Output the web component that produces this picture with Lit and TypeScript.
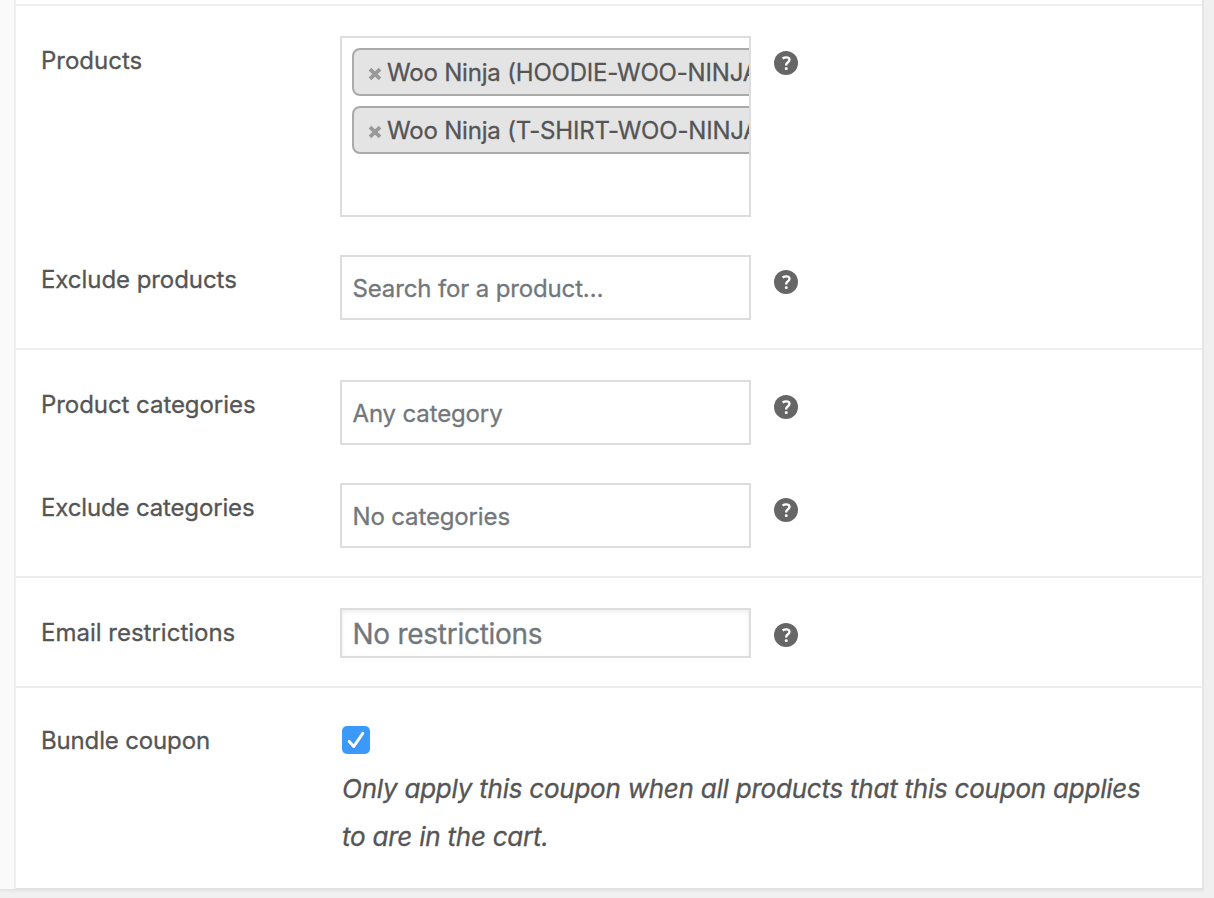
import { LitElement, html, css, svg } from "lit";
import { customElement, property } from "lit/decorators.js";

@customElement("help-tip")
class HelpTip extends LitElement {
  static styles = css`
    :host { display: block; width: 24px; height: 24px; }
    .icon { display: block; }
  `;
  render() {
    return html`<svg class="icon" width="24" height="24" viewBox="0 0 24 24" role="img" aria-label="Help">
      ${svg`<circle cx="12" cy="12" r="12" fill="#666"/>
      <path d="M8.6 7.5C9.7 6.7 10.8 6.3 12.2 6.3c2 0 3.3.8 3.3 2.5 0 1.3-.8 2-1.8 2.7-1 .7-1.5 1.2-1.5 2.3v.6" fill="none" stroke="#fff" stroke-width="2.3"/>
      <rect x="10.8" y="16.2" width="2.9" height="2.8" rx="1.2" fill="#fff"/>`}
    </svg>`;
  }
}

@customElement("coupon-field")
class CouponField extends LitElement {
  @property() label = "";
  @property({ type: Boolean }) help = false;
  static styles = css`
    :host { display: grid; grid-template-columns: 299px 411px 24px; align-items: start; padding-left: 25px; }
    .label { padding-top: 10px; line-height: 30px; letter-spacing: var(--label-spacing, 0); white-space: nowrap; }
    .tip { margin: 15px 0 0 23px; }
  `;
  render() {
    return html`<label class="label">${this.label}</label><slot></slot>
      ${this.help ? html`<help-tip class="tip"></help-tip>` : ""}`;
  }
}

@customElement("app-root")
class AppRoot extends LitElement {
  static styles = css`
    :host {
      display: block; height: 898px; overflow: hidden; background: #f0f0f0;
      color: #555; font: 24px/30px Inter, "Noto Sans", sans-serif;
      -webkit-text-stroke: 0.3px currentColor;
    }
    .panel {
      display: grid; grid-template-columns: 14px 1fr; box-sizing: border-box;
      width: 1204px; height: 890px; background: #fff;
      border-right: 2px solid #e5e5e5; border-bottom: 2px solid #e2e2e2;
      box-shadow: 0 2px 2px rgba(0, 0, 0, 0.03);
    }
    .tabs { background: #fafafa; }
    .content { border-left: 2px solid #eee; padding-top: 4px; }
    .group { border-top: 2px solid #eee; padding: 30px 0 28px; display: flex; flex-direction: column; gap: 38px; }
    .exclude-products, .categories { --label-spacing: -0.06px; }
    .exclude-categories, .bundle-coupon { --label-spacing: -0.15px; }
    .box { box-sizing: border-box; width: 411px; height: 65px; border: 2px solid #ddd; overflow: hidden; background: #fff; }
    .search { padding: 17px 10.5px; color: #72777c; letter-spacing: -0.14px; }
    .multi { height: 181px; padding: 10px; display: flex; flex-direction: column; gap: 10px; align-items: flex-start; }
    .tag {
      box-sizing: border-box; height: 48px; width: 460px; flex: none; display: flex; align-items: center;
      border: 2px solid #aaa; border-radius: 8px; background: #e4e4e4; padding-left: 14px; white-space: nowrap;
      letter-spacing: -0.19px;
    }
    .remove { margin: 3px 5px 0 0; flex: none; }
    .name { padding-top: 2px; }
    .email {
      height: 50px; padding: 6px 10.5px; font-size: 28px; line-height: 36px; color: #72777c; letter-spacing: -0.27px;
      box-shadow: inset 0 2px 4px rgba(0, 0, 0, 0.07);
    }
    .bundle { padding-top: 28px; }
    .check { padding: 10px 0 0 2px; }
    .tick { display: block; }
    .description { margin: 11px 0 0; width: 830px; font-size: 26px; line-height: 48px; font-style: italic; letter-spacing: -0.235px; }
    .line { display: block; white-space: nowrap; }
  `;
  tag(text: string) {
    return html`<div class="tag"><svg class="remove" width="14" height="14" viewBox="0 0 14 14">
      <path d="M2 2.2l10 9.6M12 2.2L2 11.8" stroke="#999" stroke-width="3.8"/></svg><span class="name">${text}</span></div>`;
  }
  render() {
    return html`<main class="panel">
      <aside class="tabs"></aside>
      <section class="content">
        <div class="group">
          <coupon-field class="products" label="Products" help>
            <div class="box multi">${this.tag("Woo Ninja (HOODIE-WOO-NINJA)")}${this.tag("Woo Ninja (T-SHIRT-WOO-NINJA)")}</div>
          </coupon-field>
          <coupon-field class="exclude-products" label="Exclude products" help>
            <div class="box search">Search for a product…</div>
          </coupon-field>
        </div>
        <div class="group">
          <coupon-field class="categories" label="Product categories" help>
            <div class="box search">Any category</div>
          </coupon-field>
          <coupon-field class="exclude-categories" label="Exclude categories" help>
            <div class="box search">No categories</div>
          </coupon-field>
        </div>
        <div class="group">
          <coupon-field class="emails" label="Email restrictions" help>
            <div class="box email">No restrictions</div>
          </coupon-field>
        </div>
        <div class="group bundle">
          <coupon-field class="bundle-coupon" label="Bundle coupon">
            <div class="check">
              <svg class="tick" width="28" height="28" viewBox="0 0 28 28" role="img" aria-label="Checked">
                <rect width="28" height="28" rx="5" fill="#3b99fc"/>
                <path d="M7.2 16.4l4.5 5.2L20.8 8.2" fill="none" stroke="#2474c8" stroke-opacity=".4" stroke-width="3" stroke-linecap="round" stroke-linejoin="round"/>
                <path d="M7.2 15.4l4.5 5.2L20.8 7.4" fill="none" stroke="#fff" stroke-width="3" stroke-linecap="round" stroke-linejoin="round"/>
              </svg>
              <p class="description"><span class="line">Only apply this coupon when all products that this coupon applies</span> <span class="line">to are in the cart.</span></p>
            </div>
          </coupon-field>
        </div>
      </section>
    </main>`;
  }
}
